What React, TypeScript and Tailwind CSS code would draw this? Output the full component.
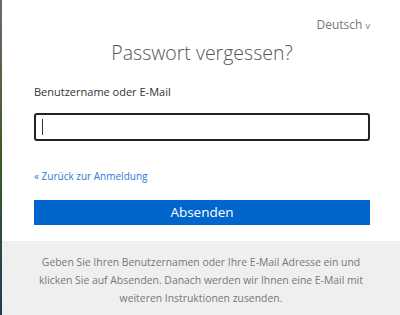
export default function App() {
  return (
    <div className="flex h-[315px] w-[400px] overflow-hidden bg-white" style={{ fontFamily: '"Open Sans", sans-serif' }}>
      <div className="w-[2px] shrink-0 bg-gradient-to-b from-[#6b6b6b] via-[#3f5a1e] to-[#1e3a5a]" />
      <div className="flex flex-1 flex-col">
        <div className="flex flex-col pl-[32px] pr-[30px] pt-[16px]">
          <div className="flex justify-end">
            <span className="text-[12px] text-[#777]">
              Deutsch <span className="text-[9px]">v</span>
            </span>
          </div>
          <h1 className="mt-[4px] text-center text-[19.5px] font-light text-[#555]">Passwort vergessen?</h1>
          <label className="mt-[17px] text-[11px] text-[#333]">Benutzername oder E-Mail</label>
          <div className="mt-[12px] flex h-[28px] items-center rounded-[3px] border-2 border-[#222] px-[6px]">
            <div className="h-[16px] w-px bg-[#333]" />
          </div>
          <a className="mt-[28px] text-[10px] text-[#2a7ad6]">« Zurück zur Anmeldung</a>
          <button className="mt-[16px] h-[25px] bg-[#0066cc] text-[13.5px] text-white">Absenden</button>
        </div>
        <div className="mt-[16px] flex flex-1 flex-col items-center bg-[#efefef] px-[30px] pt-[12px] text-center text-[10.4px] leading-[18px] text-[#777]">
          <p>
            Geben Sie Ihren Benutzernamen oder Ihre E-Mail Adresse ein und klicken Sie auf Absenden. Danach werden wir Ihnen eine E-Mail mit weiteren Instruktionen zusenden.
          </p>
        </div>
      </div>
    </div>
  );
}
